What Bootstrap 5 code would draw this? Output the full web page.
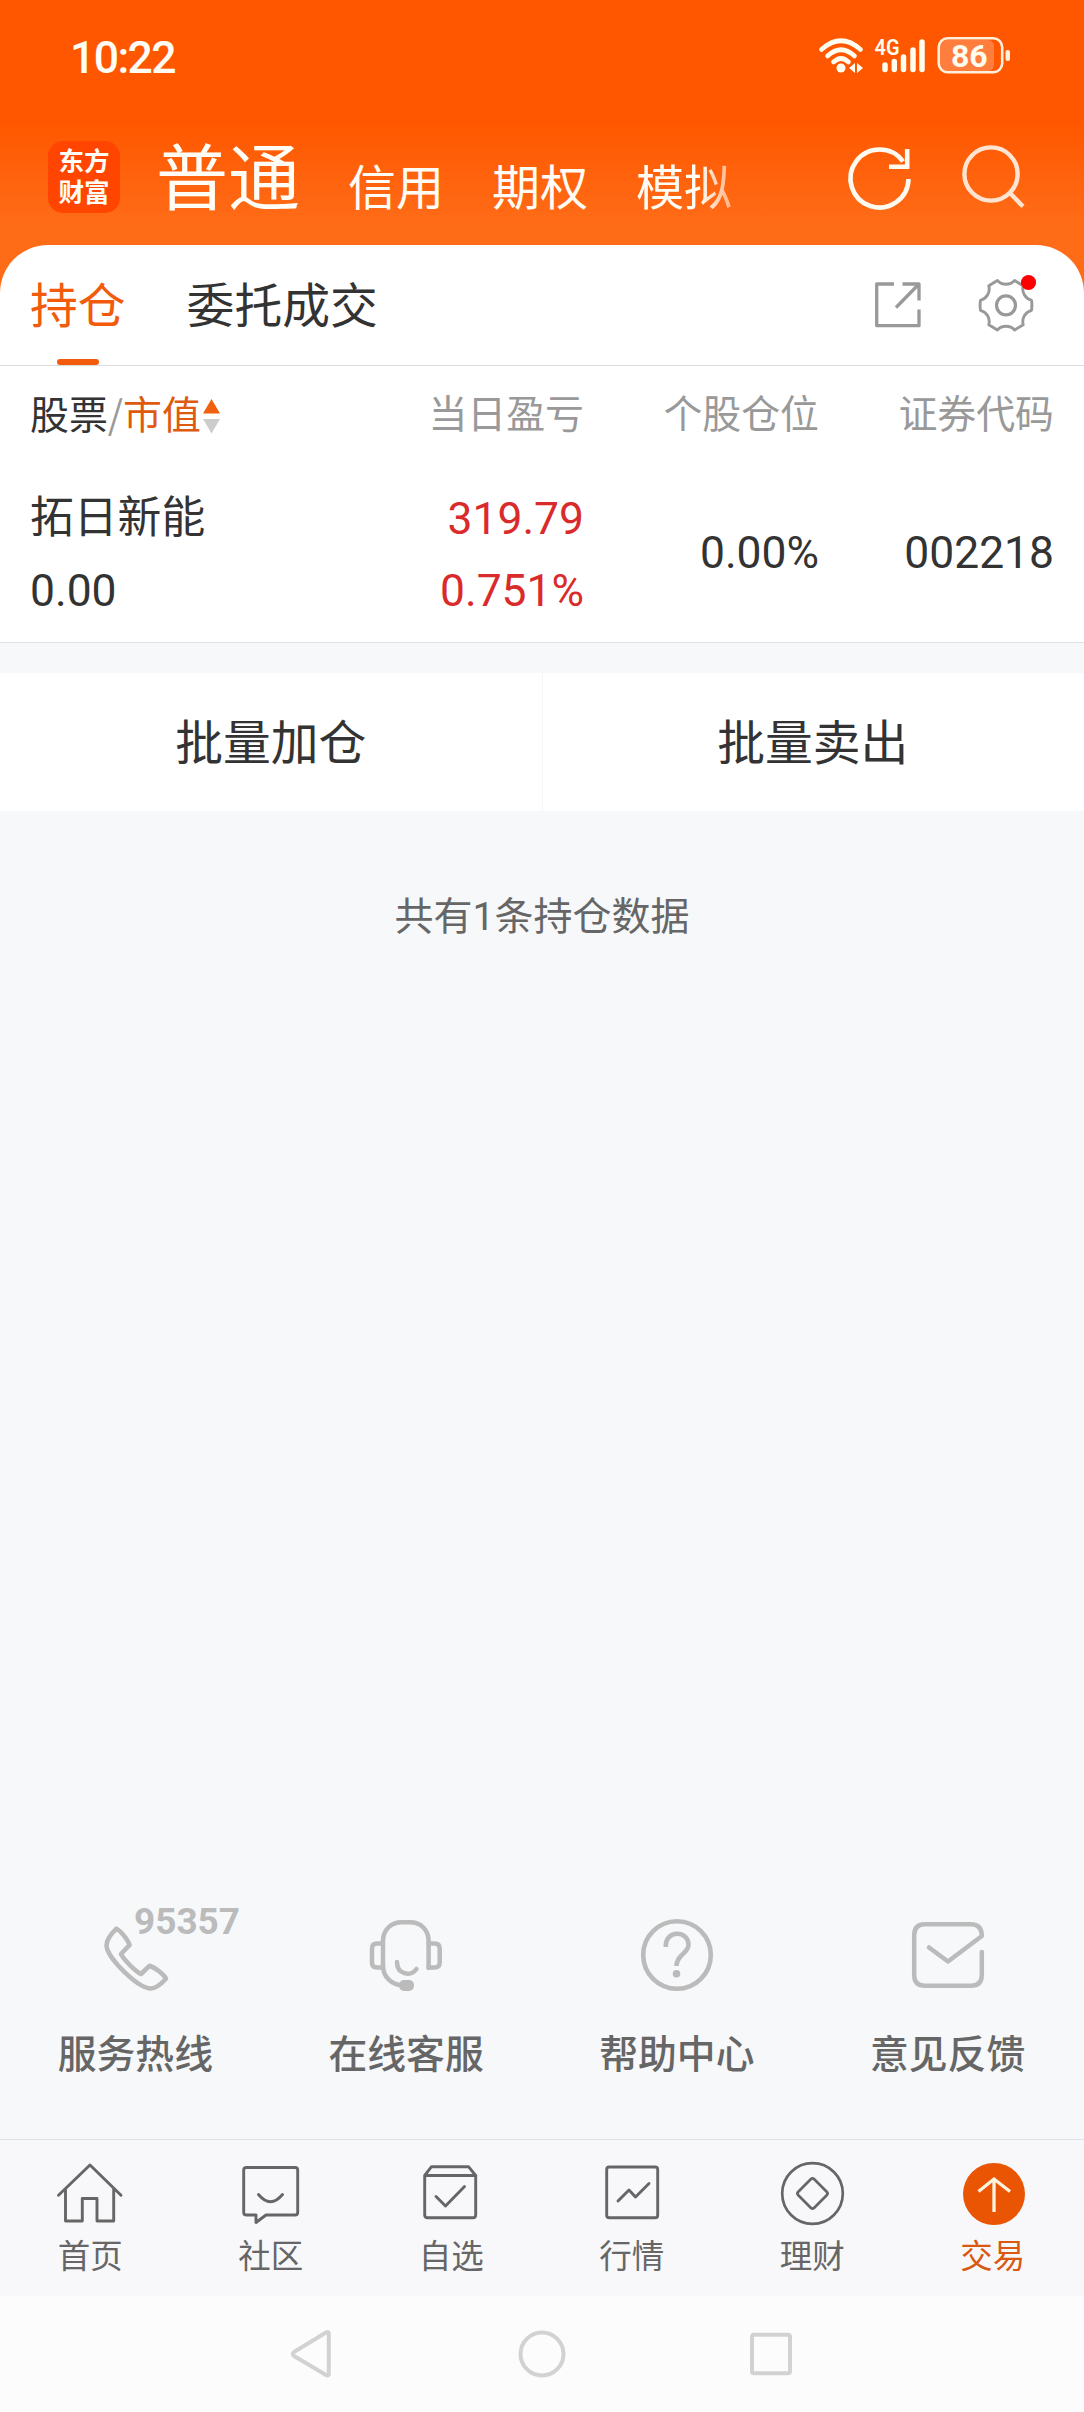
<!DOCTYPE html>
<html lang="zh-CN">
<head>
<meta charset="utf-8">
<meta name="viewport" content="width=device-width, initial-scale=1">
<title>东方财富 - 交易</title>
<link href="https://cdn.jsdelivr.net/npm/bootstrap@5.3.0/dist/css/bootstrap.min.css" rel="stylesheet">
<style>
body{font-family:"Noto Sans CJK SC",sans-serif;color:#333;background:#f7f8fa;margin:0}
svg{display:block;flex:none;overflow:visible}
.screen{width:1084px;height:2412px;overflow:hidden}
.hero{height:293px;background:linear-gradient(#ff5700 0,#ff5700 122px,#ff6c18 225px,#ff6c18 100%);color:#fffdf5}
.statusbar{height:110px;padding:0 73px 0 70px}
.clock{font-family:Roboto,sans-serif;font-size:44.5px;font-weight:500;line-height:110px;letter-spacing:-1.6px;margin-top:6px}
.topbar{height:135px;padding:0 58px 0 48px}
.logo{width:72px;height:72px;border-radius:15px;background:#ff4500;font-size:25.6px;font-weight:700;line-height:30.5px;margin-top:-1px;padding-top:4px}
.accounts{margin-left:36px;gap:48px;font-size:48px;line-height:100px}
.accounts .current{font-size:72px}
.accounts .minor{position:relative;top:1px}
.accounts .fading{-webkit-mask-image:linear-gradient(90deg,#000 65%,rgba(0,0,0,.5) 100%);mask-image:linear-gradient(90deg,#000 65%,rgba(0,0,0,.5) 100%)}
.sheet{margin-top:-48px;border-radius:48px 48px 0 0;background:#fff}
.subtabs{height:121px;padding:0 47px 0 30px;border-bottom:1px solid #dcdcdc;font-size:47.8px}
.subtabs .tab{line-height:115px;height:120px}
.subtabs .on{color:#f25a0c}
.subtabs .on::after{content:"";display:block;width:42px;height:6px;border-radius:3px;background:#f25a0c;margin:-1px auto 0}
.holdings{padding:0 30px}
.heads{height:93px;font-size:38.9px;line-height:91px;color:#999}
.heads .name{color:#333}
.heads .sort{color:#de5a10}
.c1{width:317px}.c2{width:237px}.c3{width:235px}.c4{width:235px}
.position{height:183px;font-size:43.8px;line-height:72px}
.position .upper{padding-top:20px}
.num{font-family:Roboto,sans-serif;font-size:44.4px;line-height:72px}
.position .lift{line-height:70px;height:72px}
.position .mid{padding-top:5px}
.rise{color:#d92b2b}
.batch{height:138px;font-size:47.8px;line-height:133px;margin-top:30px;background:#fff;padding-right:1px}
.batch .cell+.cell{border-left:1px solid #f7f7f9}
.total{font-size:39px;line-height:50px;color:#666;margin-top:77px}
.total span{font-family:Roboto,sans-serif}
.services{height:235px;font-size:38.8px;font-weight:500;color:#666;padding-right:1px}
.services .cell{line-height:54px}
.services svg{margin-bottom:30px}
.tabbar{height:157px;background:#f8f8fb;border-top:1px solid #dfe1e4;font-size:32.5px;line-height:40px;color:#666;padding-right:1px}
.tabbar .cell{padding-top:16px}
.tabbar svg{margin-bottom:4px}
.tabbar .on{color:#d95812}
.sysnav{height:116px;background:#fcfcfc;padding-left:284px;gap:174px}
.ln{fill:none;stroke-linecap:round;stroke-linejoin:round}
</style>
</head>
<body>
<div class="screen d-flex flex-column">
  <header class="hero flex-shrink-0">
    <div class="statusbar d-flex justify-content-between align-items-center">
      <div class="clock">10:22</div>
      <svg width="194" height="40" viewBox="817 35 194 40">
        <g class="ln" stroke="#fffdf0" stroke-width="4.600">
          <path d="M821.500 49.500Q841 32 860.500 49.500M827.500 56Q841 43.500 854.500 56M833.500 62Q841 55 848.500 62"/>
        </g>
        <circle cx="841" cy="68" r="4.500" fill="#fffdf0"/>
        <path d="M849 68l6-5v10zM863 68l-6-5v10z" fill="#fffdf0"/>
        <text x="874.500" y="55" font-family="Roboto" font-weight="600" font-size="22.500" textLength="25" lengthAdjust="spacingAndGlyphs" fill="#fffdf0">4G</text>
        <path class="ln" stroke="#fffdf0" stroke-width="5.500" d="M885 65v4.500M894.300 61.500v8M903.500 57v12.500M913 50v19.500M922 42v27.500"/>
        <rect x="940" y="40" width="54" height="31" rx="6" fill="#ff7d3d"/>
        <rect x="938.700" y="38.300" width="63.500" height="34" rx="9" fill="none" stroke="#fff0dc" stroke-width="2.600"/>
        <rect x="1005.500" y="50" width="4.500" height="11" rx="2" fill="#fff0dc"/>
        <text x="969.300" y="66.700" text-anchor="middle" font-family="Roboto" font-weight="700" font-size="32" fill="#fffdf0">86</text>
      </svg>
    </div>
    <nav class="topbar d-flex align-items-center">
      <div class="logo text-center">东方<br>财富</div>
      <div class="accounts d-flex align-items-baseline">
        <span class="current">普通</span><span class="minor">信用</span><span class="minor">期权</span><span class="minor fading">模拟</span>
      </div>
      <svg class="ms-auto" width="64" height="66" viewBox="848 145 64 66"><path fill="none" stroke="#fffaf0" stroke-width="4.600" d="M908.500 179A29 29 0 1 1 903 161.500M907.200 149V166.800H889"/></svg>
      <svg style="margin-left:49px" width="65" height="66" viewBox="961 145 65 66"><g fill="none" stroke="#ffe4d2" stroke-width="4.400"><circle cx="991" cy="174" r="26.600"/><path d="M1009.500 192.500L1023 206.500"/></g></svg>
    </nav>
  </header>

  <main class="d-flex flex-column flex-grow-1">
    <section class="sheet">
      <div class="subtabs d-flex">
        <div class="tab on">持仓</div>
        <div class="tab" style="margin-left:61px">委托成交</div>
        <svg class="ms-auto" style="margin-top:35px" width="50" height="50" viewBox="873 280 50 50"><path fill="none" stroke="#999" stroke-width="3.300" stroke-linejoin="round" d="M894 284H876.700V325.700H919V309.500M902.500 284H919V300.500M919 284L896 307.500"/></svg>
        <svg style="margin-left:54px;margin-top:28px" width="60" height="60" viewBox="977 273 60 60">
          <g transform="translate(1006 305.300)" fill="none" stroke="#999" stroke-width="2.900" stroke-linejoin="round">
            <path d="M25.500 5A11.800 11.800 0 0 0 17.200 19.500L8.600 24.700A11.800 11.800 0 0 0-8.600 24.700L-17.200 19.500A11.800 11.800 0 0 0-25.500 5Q-26.300 0-25.500-5A11.800 11.800 0 0 0-17.200-19.500L-8.600-24.700A11.800 11.800 0 0 0 8.600-24.700L17.200-19.500A11.800 11.800 0 0 0 25.500-5Q26.300 0 25.500 5Z"/>
            <circle r="9.500" stroke-width="3.200"/>
          </g>
          <circle cx="1028.500" cy="282.500" r="7.600" fill="red"/>
        </svg>
      </div>
      <div class="holdings">
        <div class="heads d-flex">
          <div class="c1 d-flex align-items-center"><span class="name">股票</span>/<span class="sort">市值</span>
            <svg style="margin-left:2px;margin-top:7px" width="17" height="35" viewBox="0 0 17 35"><path d="M8.500 0L17 14.500H0z" fill="#f0600f"/><path d="M8.500 34.500L17 20H0z" fill="#ccc"/></svg>
          </div>
          <div class="c2 text-end">当日盈亏</div><div class="c3 text-end">个股仓位</div><div class="c4 text-end">证券代码</div>
        </div>
        <div class="position d-flex">
          <div class="c1 upper"><div class="lift">拓日新能</div><div class="num pt-1">0.00</div></div>
          <div class="c2 upper text-end rise"><div class="num pt-1">319.79</div><div class="num">0.751%</div></div>
          <div class="c3 num mid text-end align-self-center">0.00%</div>
          <div class="c4 num mid text-end align-self-center">002218</div>
        </div>
      </div>
      <div class="border-top"></div>
    </section>

    <section class="batch d-flex text-center">
      <div class="cell flex-fill w-50">批量加仓</div>
      <div class="cell flex-fill w-50">批量卖出</div>
    </section>
    <p class="total text-center mb-0">共有<span>1</span>条持仓数据</p>

    <section class="services d-flex mt-auto text-center">
      <div class="cell w-25"><svg class="mx-auto" width="220" height="90" viewBox="25 1904 220 90">
        <path class="ln" stroke="#bbb" stroke-width="4.600" d="M116.500 1928.700C112 1933 106.500 1939 106.500 1945.500C107 1958 138 1988.500 151 1988.500C156 1988.500 162 1983 166 1978.700C164 1974.500 155 1967.500 149.700 1965.700L141 1974C135 1971 124 1960 121 1954L129.600 1945C128 1940 121 1931 116.500 1928.700Z"/>
        <text x="134" y="1934" font-family="Roboto" font-weight="700" font-size="37.500" textLength="106" lengthAdjust="spacingAndGlyphs" fill="#bbb">95357</text></svg>服务热线</div>
      <div class="cell w-25"><svg class="mx-auto" width="90" height="90" viewBox="361 1904 90 90">
        <g class="ln" stroke="#bbb" stroke-width="4.500"><path d="M428.600 1968V1941C428.600 1930 421 1922.300 410 1922.300H401.500C391 1922.300 383 1930 383 1941V1966C383 1977 392 1985 402 1985"/><path d="M383 1943.500H377Q372 1943.500 372 1948.500V1962.500Q372 1967.500 377 1967.500H383M428.600 1943.500H434.500Q439.700 1943.500 439.700 1948.500V1962.500Q439.700 1967.500 434.500 1967.500H428.600M397 1962C397 1974 410 1977.500 416.500 1969"/></g><rect x="399" y="1980" width="15" height="11" rx="5" fill="#bbb"/></svg>在线客服</div>
      <div class="cell w-25"><svg class="mx-auto" width="90" height="90" viewBox="632 1904 90 90">
        <g fill="none" stroke="#bbb" stroke-width="4.600"><circle cx="677" cy="1955" r="33.800"/><path d="M665.800 1947C665 1929.500 688.500 1930 688.500 1945C688.500 1953 676.500 1955 676.500 1966"/></g><circle cx="676.500" cy="1973.700" r="3.800" fill="#bbb"/></svg>帮助中心</div>
      <div class="cell w-25"><svg class="mx-auto" width="90" height="90" viewBox="903 1904 90 90">
        <path class="ln" stroke="#bbb" stroke-width="4.500" d="M981.800 1952V1975Q981.800 1985.700 971 1985.700H925Q914.200 1985.700 914.200 1975V1935Q914.200 1924.200 925 1924.200H971Q981.800 1924.200 981.800 1936L948 1961.500L929 1947.500"/></svg>意见反馈</div>
    </section>
  </main>

  <nav class="tabbar d-flex text-center flex-shrink-0">
    <div class="cell flex-fill"><svg class="mx-auto" width="72" height="74" viewBox="54 2156 72 74"><path class="ln" stroke="#666" stroke-width="2.900" d="M58.500 2195.300L90 2165L121 2195.300M65.500 2189V2221H82.300V2198.500H97V2221H113.700V2189"/></svg>首页</div>
    <div class="cell flex-fill"><svg class="mx-auto" width="72" height="74" viewBox="234 2156 72 74"><path class="ln" stroke="#666" stroke-width="2.900" d="M245.500 2167.500H294Q296.700 2167.500 296.700 2170V2212.500Q296.700 2215 294 2215H265L255 2222.500V2215H245.500Q242.700 2215 242.700 2212.500V2170Q242.700 2167.500 245.500 2167.500ZM257.500 2194.500Q269.500 2209 281.500 2194.500"/></svg>社区</div>
    <div class="cell flex-fill"><svg class="mx-auto" width="72" height="74" viewBox="415 2156 72 74"><path class="ln" stroke="#666" stroke-width="2.900" d="M424.700 2175.500L431.500 2166.700H468.500L475.700 2175.500V2215Q475.700 2217.700 473 2217.700H427.500Q424.700 2217.700 424.700 2215ZH475.700M436 2196.500L445.500 2206L464.500 2186.500"/></svg>自选</div>
    <div class="cell flex-fill"><svg class="mx-auto" width="72" height="74" viewBox="595 2156 72 74"><g class="ln" stroke="#666" stroke-width="2.900"><rect x="605.700" y="2167" width="51" height="50.700" rx="2.500"/><path d="M617 2201L628 2190L634.500 2197L648 2183.500"/></g></svg>行情</div>
    <div class="cell flex-fill"><svg class="mx-auto" width="72" height="74" viewBox="776 2156 72 74"><g class="ln" stroke="#666" stroke-width="2.700"><circle cx="812.500" cy="2193.500" r="30.300"/><rect x="801.200" y="2182.200" width="22.600" height="22.600" rx="2.500" transform="rotate(45 812.500 2193.500)"/></g></svg>理财</div>
    <div class="cell flex-fill on"><svg class="mx-auto" width="72" height="74" viewBox="957 2156 72 74"><circle cx="994" cy="2194" r="31" fill="#ea5504"/><path fill="none" stroke="#fff3e0" stroke-width="3.300" d="M994 2212V2179M978.500 2191.500L994 2179L1010 2191.500"/></svg>交易</div>
  </nav>
  <div class="sysnav d-flex align-items-center flex-shrink-0">
    <svg width="56" height="56" viewBox="284 2326 56 56"><path class="ln" stroke="#d2d2d2" stroke-width="4" d="M328.800 2333V2374.500Q328 2376 326 2375L294 2356Q291.500 2354 294 2352L326 2332.500Q328 2331.500 328.800 2333Z"/></svg>
    <svg width="56" height="56" viewBox="514 2326 56 56"><circle cx="542" cy="2354" r="21.500" fill="none" stroke="#d2d2d2" stroke-width="4"/></svg>
    <svg width="56" height="56" viewBox="744 2326 56 56"><rect x="752" y="2334.700" width="38" height="38.500" rx="2" fill="none" stroke="#d2d2d2" stroke-width="4"/></svg>
  </div>
</div>
<script src="https://cdn.jsdelivr.net/npm/bootstrap@5.3.0/dist/js/bootstrap.bundle.min.js"></script>
</body>
</html>
